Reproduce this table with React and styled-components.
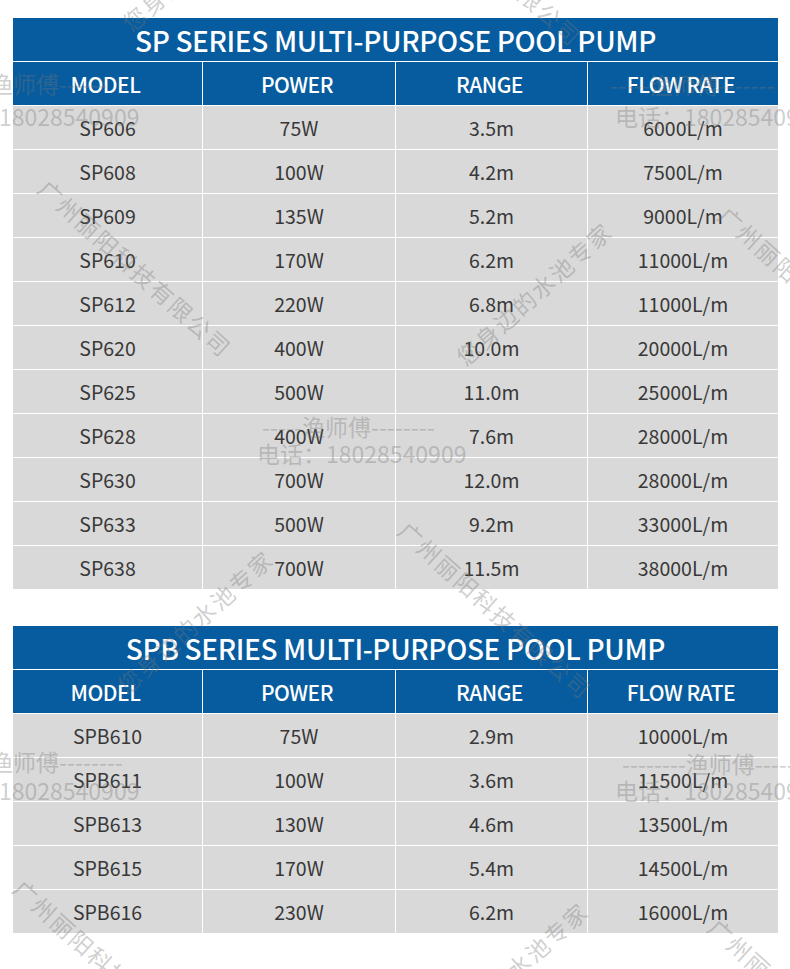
import React from "react";
import styled, { createGlobalStyle } from "styled-components";

const Global = createGlobalStyle`
  html, body { margin: 0; padding: 0; background: #fff; }
  body { font-family: "Noto Sans CJK SC", "Noto Sans", sans-serif; }
`;

const Page = styled.div`
  position: relative;
  width: 790px;
  height: 969px;
  overflow: hidden;
  background: #fff;
  padding: 18px 0 0 13px;
  box-sizing: border-box;
  display: flex;
  flex-direction: column;
  gap: 37px;
`;

const Table = styled.div`
  display: grid;
  width: 765px;
  grid-template-columns: 189px 192px 191px 190px;
  grid-auto-rows: 43px;
  gap: 1px;
  background: #fff;
`;

const Title = styled.div`
  grid-column: 1 / -1;
  background: #065c9e;
  color: #fff;
  display: flex;
  align-items: center;
  justify-content: center;
  font-family: "Noto Sans CJK SC", "Noto Sans", sans-serif;
  font-weight: 500;
  font-size: 28px;
  letter-spacing: -0.35px;
  padding-top: 1px;
`;

const Head = styled.div`
  background: #065c9e;
  color: #fff;
  display: flex;
  align-items: center;
  justify-content: center;
  font-family: "Noto Sans CJK SC", "Noto Sans", sans-serif;
  font-weight: 500;
  font-size: 21px;
  letter-spacing: -0.5px;
  padding: 1px 4px 0 0;
`;

const Cell = styled.div`
  background: #d9d9d9;
  color: #383838;
  display: flex;
  align-items: center;
  justify-content: center;
  font-family: "Noto Sans CJK SC", "Noto Sans", sans-serif;
  font-weight: 400;
  font-size: 19.5px;
`;

const Marks = styled.div`
  position: absolute;
  inset: 0;
  pointer-events: none;
`;

const Mark = styled.div`
  position: absolute;
  left: ${(p) => p.$x}px;
  top: ${(p) => p.$y}px;
  transform: rotate(${(p) => p.$r || 0}deg);
  transform-origin: 0 0;
  white-space: nowrap;
  color: rgba(120, 120, 120, 0.36);
  font-family: "Noto Sans CJK SC", sans-serif;
  font-size: 23px;
  font-weight: 400;
  line-height: 1;
  letter-spacing: ${(p) => p.$ls || 0}px;
`;

const sp = [
  ["SP606", "75W", "3.5m", "6000L/m"],
  ["SP608", "100W", "4.2m", "7500L/m"],
  ["SP609", "135W", "5.2m", "9000L/m"],
  ["SP610", "170W", "6.2m", "11000L/m"],
  ["SP612", "220W", "6.8m", "11000L/m"],
  ["SP620", "400W", "10.0m", "20000L/m"],
  ["SP625", "500W", "11.0m", "25000L/m"],
  ["SP628", "400W", "7.6m", "28000L/m"],
  ["SP630", "700W", "12.0m", "28000L/m"],
  ["SP633", "500W", "9.2m", "33000L/m"],
  ["SP638", "700W", "11.5m", "38000L/m"],
];

const spb = [
  ["SPB610", "75W", "2.9m", "10000L/m"],
  ["SPB611", "100W", "3.6m", "11500L/m"],
  ["SPB613", "130W", "4.6m", "13500L/m"],
  ["SPB615", "170W", "5.4m", "14500L/m"],
  ["SPB616", "230W", "6.2m", "16000L/m"],
];

const heads = ["MODEL", "POWER", "RANGE", "FLOW RATE"];

function PumpTable({ title, rows }) {
  return (
    <Table>
      <Title>{title}</Title>
      {heads.map((h) => (
        <Head key={h}>{h}</Head>
      ))}
      {rows.map((r) => r.map((v, i) => <Cell key={r[0] + i}>{v}</Cell>))}
    </Table>
  );
}

const marks = [
  { x: -10, y: 72, t: "渔师傅------" },
  { x: -70, y: 105, t: "电话：18028540909" },
  { x: 610, y: 73, t: "-----渔师傅-------" },
  { x: 615, y: 105, t: "电话：18028540909" },
  { x: 262, y: 415, t: "-----渔师傅--------" },
  { x: 257, y: 442, t: "电话：18028540909" },
  { x: -10, y: 750, t: "渔师傅--------" },
  { x: -70, y: 779, t: "电话：18028540909" },
  { x: 622, y: 752, t: "--------渔师傅-----" },
  { x: 615, y: 779, t: "电话：18028540909" },
  { x: 50, y: 176, t: "广州丽阳科技有限公司", r: 42, ls: 2 },
  { x: 410, y: 518, t: "广州丽阳科技有限公司", r: 42, ls: 2 },
  { x: 730, y: 203, t: "广州丽阳科技有限公司", r: 42, ls: 2 },
  { x: 25, y: 876, t: "广州丽阳科技有限公司", r: 42, ls: 2 },
  { x: 720, y: 915, t: "广州丽阳科技有限公司", r: 42, ls: 2 },
  { x: 452, y: 352, t: "您身边的水池专家", r: -42, ls: 2 },
  { x: 113, y: 680, t: "您身边的水池专家", r: -42, ls: 2 },
  { x: 428, y: 1032, t: "您身边的水池专家", r: -42, ls: 2 },
  { x: 118, y: 18, t: "您身边的水池专家", r: -42, ls: 2 },
  { x: 400, y: -135, t: "广州丽阳科技有限公司", r: 42, ls: 2 },
];

export default function App() {
  return (
    <>
      <Global />
      <Page>
        <PumpTable title="SP SERIES MULTI-PURPOSE POOL PUMP" rows={sp} />
        <PumpTable title="SPB SERIES MULTI-PURPOSE POOL PUMP" rows={spb} />
        <Marks>
          {marks.map((m, i) => (
            <Mark key={i} $x={m.x} $y={m.y} $r={m.r} $ls={m.ls}>
              {m.t}
            </Mark>
          ))}
        </Marks>
      </Page>
    </>
  );
}
